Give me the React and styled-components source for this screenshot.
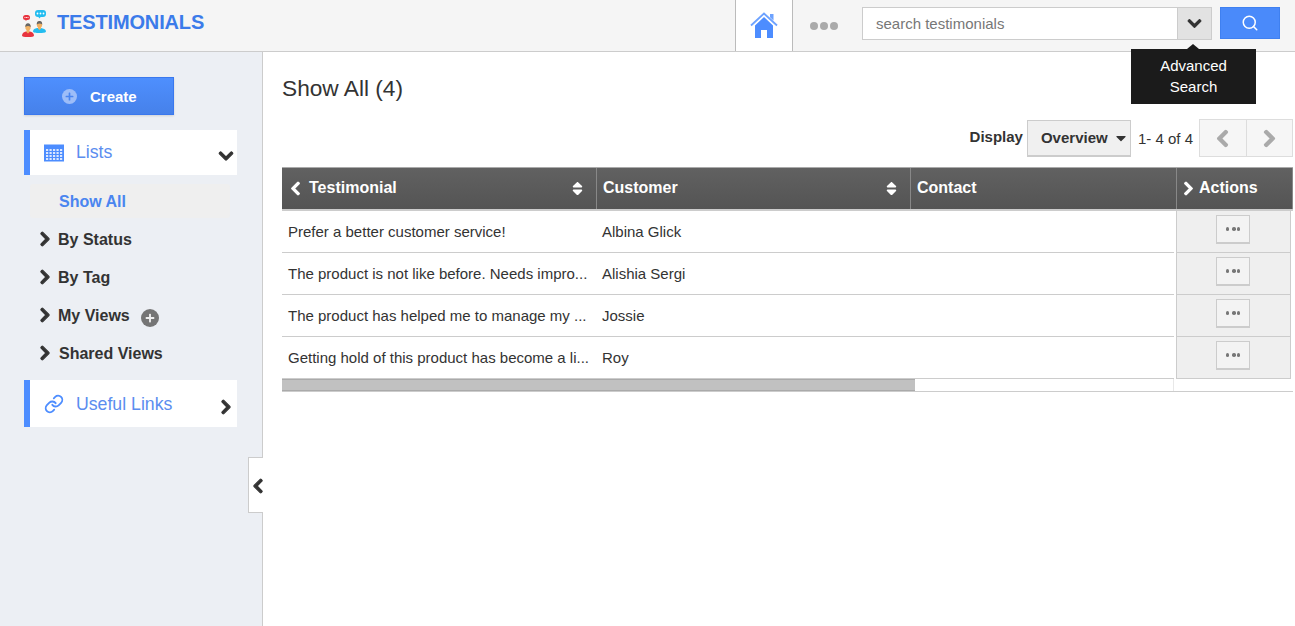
import React from "react";
import styled, { createGlobalStyle } from "styled-components";
import { FaChevronDown, FaChevronRight, FaChevronLeft, FaPlus, FaSort, FaCaretDown } from "react-icons/fa";
import { Search, Link as LinkIcon } from "lucide-react";

const Global = createGlobalStyle`
  html, body { margin: 0; padding: 0; height: 100%; overflow: hidden; }
  body { font-family: "Liberation Sans", Arial, sans-serif; color: #333; background: #fff; }
  #root { height: 100%; }
  * { box-sizing: border-box; }
`;

const Right = styled(FaChevronRight)`stroke: currentColor; stroke-width: 36;`;
const Left = styled(FaChevronLeft)`stroke: currentColor; stroke-width: 36;`;
const Down = styled(FaChevronDown)`stroke: currentColor; stroke-width: 36;`;

const Page = styled.div`
  width: 1295px; height: 626px; display: flex; flex-direction: column; position: relative; overflow: hidden;
`;
const Header = styled.header`
  height: 52px; flex: none; display: flex; align-items: flex-start; background: #f5f5f5; border-bottom: 1px solid #ccc;
`;
const Brand = styled.div`
  display: flex; align-items: flex-start; padding: 10px 0 0 22px; gap: 11px; flex: 1;
`;
const BrandName = styled.span`
  font-size: 20px; font-weight: 700; color: #3b7bea; line-height: 26px; letter-spacing: -0.15px; margin-top: -1px;
`;
const HomeTab = styled.div`
  width: 58px; height: 51px; background: #fff; border-left: 1px solid #bbb; border-right: 1px solid #bbb;
  display: flex; align-items: center; justify-content: center; padding-bottom: 2px;
`;
const Dots = styled.div`
  width: 69px; height: 51px; display: flex; align-items: center; gap: 2px; padding-left: 17px;
`;
const Dot = styled.i`
  width: 8px; height: 8px; border-radius: 50%; background: #aaa; display: block;
`;
const SearchBox = styled.div`
  width: 350px; height: 33px; margin-top: 7px; display: flex; border: 1px solid #ccc; background: #fff; position: relative;
`;
const SearchInput = styled.div`
  flex: 1; font-size: 15px; color: #777; padding-left: 13px; line-height: 31px;
`;
const DropBtn = styled.div`
  width: 34px; background: #e2e2e2; border-left: 1px solid #ccc; display: flex; align-items: center; justify-content: center;
  color: #333; font-size: 15px;
`;
const SearchBtn = styled.div`
  width: 60px; height: 32px; margin: 7px 15px 0 8px; background: #4a8afa; border: 1px solid #3f80f0;
  display: flex; align-items: center; justify-content: center; color: #fff;
`;
const Tooltip = styled.div`
  position: absolute; top: 49px; left: 1131px; width: 125px; height: 55px; background: #1b1b1b; color: #fff;
  font-size: 15px; line-height: 21px; text-align: center; padding-top: 6px; z-index: 5;
  &::before {
    content: ""; position: absolute; top: -5px; left: 56px; border: 6px solid transparent; border-top: 0; border-bottom: 5px solid #1b1b1b;
  }
`;

const Body = styled.div`
  flex: 1; display: flex; min-height: 0;
`;
const Sidebar = styled.aside`
  width: 263px; flex: none; background: #eceff4; border-right: 1px solid #ccc; padding: 25px 25px 0 24px; position: relative;
`;
const CreateBtn = styled.div`
  width: 150px; height: 38px; background: linear-gradient(#4e8ffe, #4681ea); border: 1px solid #3a78ee;
  display: flex; align-items: center; color: #fff; font-size: 15px; font-weight: 700; padding-left: 37px; gap: 13px;
  box-shadow: 0 1px 2px rgba(0,0,0,.12);
`;
const CreateIcon = styled.span`
  width: 15px; height: 15px; border-radius: 50%; background: #9dbdf8; color: #4a85f0; font-size: 9px;
  display: flex; align-items: center; justify-content: center;
`;
const Panel = styled.div`
  width: 213px; height: ${p => p.$h}px; margin-top: ${p => p.$mt}px; background: #fff; border-left: 6px solid #4d8dff;
  display: flex; align-items: center; color: #5b8def; font-size: 17.7px; position: relative; padding-top: ${p => p.$pt || 0}px;
`;
const PanelIcon = styled.span`
  width: 46px; padding-left: ${p => p.$pl}px; display: flex; align-items: center; color: #4d8dff; flex: none;
`;
const PanelChevron = styled.span`
  position: absolute; right: 3px; top: ${p => p.$top}px; color: #333; font-size: 16px; display: flex;
`;
const Nav = styled.div`
  padding: 9px 0 0 6px; display: flex; flex-direction: column; margin-bottom: 8px;
`;
const ActiveItem = styled.div`
  width: 200px; height: 34px; background: #efefef; border-radius: 3px; color: #4a85f0; font-weight: 700; font-size: 16px;
  line-height: 36px; padding-left: 29px; margin-bottom: 2px;
`;
const NavItem = styled.div`
  height: 38px; display: flex; align-items: center; font-weight: 700; font-size: 16px; color: #333; padding: 2px 0 0 7px;
  & > svg { font-size: 16px; margin-right: ${p => p.$gap || 5}px; flex: none; margin-top: -2px; }
`;
const AddBadge = styled.span`
  width: 18px; height: 18px; border-radius: 50%; background: #757575; color: #eee; margin-left: 11px; margin-top: 3px;
  display: flex; align-items: center; justify-content: center; font-size: 10px;
`;
const Handle = styled.div`
  position: absolute; top: 405px; left: 248px; width: 15px; height: 56px; background: #fff; border: 1px solid #ccc; border-right: 0;
  display: flex; align-items: center; justify-content: flex-end; color: #333; font-size: 16px; z-index: 2; overflow: hidden;
  padding-top: 2px;
  svg { margin-right: -3px; flex: none; }
`;

const Main = styled.main`
  flex: 1; min-width: 0; padding: 0 2px 0 19px;
`;
const Title = styled.h1`
  margin: 0; padding-top: 23px; font-size: 22.7px; font-weight: 400; line-height: 26px; color: #333; height: 67px;
`;
const Toolbar = styled.div`
  display: flex; justify-content: flex-end; align-items: center; height: 38px;
`;
const DisplayLabel = styled.span`
  font-size: 15px; font-weight: 700; margin-right: 4px; margin-top: -3px;
`;
const Select = styled.div`
  width: 104px; height: 37px; background: #f0f0f0; border: 1px solid #ccc; border-bottom-width: 2px; display: flex; align-items: center;
  padding-left: 13px; font-size: 15px; font-weight: 700; color: #333; gap: 5px;
`;
const Count = styled.span`
  font-size: 15px; margin: 0 6px 0 7px; color: #333;
`;
const Pager = styled.div`
  display: flex; width: 94px; height: 38px; border: 1px solid #ddd; background: #f6f6f6;
`;
const PageBtn = styled.div`
  flex: 1; display: flex; align-items: center; justify-content: center; color: #aaa; font-size: 19px;
  & + & { border-left: 1px solid #ddd; }
`;

const Grid = styled.div`
  margin-top: 10px; border-bottom: 1px solid #ccc; display: flex; flex-direction: column; width: 1011px;
`;
const HeadRow = styled.div`
  display: grid; grid-template-columns: 315px 314px 266px 116px; height: 44px;
  background: linear-gradient(#616161, #545454); border-top: 1px solid #aaa; border-bottom: 2px solid #ccc;
`;
const HeadCell = styled.div`
  display: flex; align-items: center; color: #fff; font-size: 16px; font-weight: 700; padding: 0 10px 1px ${p => p.$pl}px;
  border-right: 1px solid #888; min-width: 0;
  & > svg { font-size: 15px; margin-right: ${p => p.$gap}px; flex: none; }
`;
const SortIcon = styled.span`
  margin-left: auto; display: flex; font-size: 17px;
`;
const Below = styled.div`
  display: flex; justify-content: space-between; padding-right: 2px;
`;
const Scroller = styled.div`
  width: 892px; display: flex; flex-direction: column;
`;
const Row = styled.div`
  display: grid; grid-template-columns: 314px 1fr; height: 42px; border-bottom: 1px solid #ccc; align-items: center; font-size: 15px; color: #333;
`;
const Cell = styled.div`
  padding: 0 6px; white-space: nowrap; min-width: 0;
`;
const Track = styled.div`
  height: 12px; background: #fff; border-right: 1px solid #e8e8e8;
`;
const Thumb = styled.div`
  width: 633px; height: 12px; background: #c1c1c1; border-top: 1px solid #aaa; border-bottom: 1px solid #aaa;
`;
const Actions = styled.div`
  width: 115px; display: flex; flex-direction: column; border: 1px solid #ccc; border-top: 0; background: #efefef; align-self: flex-start;
`;
const ActionCell = styled.div`
  height: 42px; display: flex; align-items: flex-start; justify-content: center; padding: 4px 1px 0 0;
  &:not(:last-child) { border-bottom: 1px solid #ccc; }
  &:last-child { height: 41px; }
`;
const MoreBtn = styled.div`
  width: 34px; height: 29px; background: #f3f3f3; border: 1px solid #ccc; border-bottom-width: 2px; display: flex; align-items: center; justify-content: center; gap: 1px;
`;
const MiniDot = styled.i`
  width: 3.5px; height: 3.5px; border-radius: 50%; background: #777; display: block;
  &:first-child { margin-right: 2px; }
`;

const Logo = () => (
  <svg width="24" height="27" viewBox="0 0 24 27">
    <rect x="1" y="5" width="7" height="5" rx="2.500" fill="#e8343f" />
    <path d="M3 9.500l1 1.500 1-1.500z" fill="#e8343f" />
    <g fill="#fff"><circle cx="3" cy="7.500" r=".6" /><circle cx="4.500" cy="7.500" r=".6" /><circle cx="6" cy="7.500" r=".6" /></g>
    <rect x="13" y="0" width="11" height="7" rx="3" fill="#23bdf0" />
    <path d="M16 6.500l1.500 2 1.500-2z" fill="#23bdf0" />
    <g fill="#fff"><circle cx="15.500" cy="3.500" r=".9" /><circle cx="18.500" cy="3.500" r=".9" /><circle cx="21.500" cy="3.500" r=".9" /></g>
    <path d="M0 25.500c0-2.500 2-3.500 4-4h4c2 .5 4 1.500 4 4 0 1-2 1.500-6 1.500s-6-.5-6-1.500z" fill="#e8343f" />
    <path d="M4.500 19h3v3l-1.500 1.500-1.500-1.500z" fill="#f1b163" />
    <ellipse cx="6" cy="17" rx="2.700" ry="3.300" fill="#f1b163" />
    <path d="M3.300 17c0-3 1.200-3.800 2.700-3.800s2.700.8 2.700 3.800c-1.800-1.300-3.600-1.300-5.400 0z" fill="#666" />
    <path d="M11 21.500c0-2.500 2-3 4-3.500h4c2 .5 5 1 5 3.500 0 1-3 1.500-6.500 1.500s-6.500-.5-6.500-1.500z" fill="#23bdf0" />
    <path d="M16 16h3v2.500l-1.500 1.500-1.500-1.500z" fill="#f1b163" />
    <ellipse cx="17.500" cy="14.500" rx="2.700" ry="3.300" fill="#f1b163" />
    <path d="M14.800 14.500c0-3 1.200-3.500 2.700-3.500s2.700.5 2.700 3.500c-1.800-1.300-3.600-1.300-5.400 0z" fill="#666" />
  </svg>
);

const HomeIcon = () => (
  <svg width="28" height="28" viewBox="0 0 28 28">
    <path d="M1 14.500L14 2.500l13 12" fill="none" stroke="#6da2ff" strokeWidth="1.800" />
    <path d="M20 3h3.500v6.500L20 6.300z" fill="#6da2ff" />
    <path d="M5 14.500L14 6l9 8.500V27h-6v-8h-6v8H5z" fill="#4d8dff" />
  </svg>
);

const TableIcon = () => (
  <svg width="20" height="18" viewBox="0 0 20 18">
    <rect x="0" y="0.500" width="20" height="17" fill="#4d8dff" />
    <g fill="#dbe7ff">
      {[5, 8, 11, 14].map(y => [2, 5.5, 9, 12.5, 16].map(x => (
        <rect key={`${x}-${y}`} x={x} y={y} width="2.200" height="2" />
      )))}
    </g>
  </svg>
);

const rows = [
  ["Prefer a better customer service!", "Albina Glick"],
  ["The product is not like before. Needs impro...", "Alishia Sergi"],
  ["The product has helped me to manage my ...", "Jossie"],
  ["Getting hold of this product has become a li...", "Roy"],
];

export default function App() {
  return (
    <Page>
      <Global />
      <Header>
        <Brand>
          <Logo />
          <BrandName>TESTIMONIALS</BrandName>
        </Brand>
        <HomeTab><HomeIcon /></HomeTab>
        <Dots><Dot /><Dot /><Dot /></Dots>
        <SearchBox>
          <SearchInput>search testimonials</SearchInput>
          <DropBtn><Down /></DropBtn>
        </SearchBox>
        <SearchBtn><Search size={18} strokeWidth={2} /></SearchBtn>
      </Header>
      <Tooltip>Advanced<br />Search</Tooltip>
      <Body>
        <Sidebar>
          <CreateBtn><CreateIcon><FaPlus /></CreateIcon>Create</CreateBtn>
          <Panel $h={45} $mt={15}>
            <PanelIcon $pl={14}><TableIcon /></PanelIcon>Lists
            <PanelChevron $top={18}><Down /></PanelChevron>
          </Panel>
          <Nav>
            <ActiveItem>Show All</ActiveItem>
            <NavItem><Right />By Status</NavItem>
            <NavItem><Right />By Tag</NavItem>
            <NavItem><Right />My Views<AddBadge><FaPlus /></AddBadge></NavItem>
            <NavItem $gap={6}><Right />Shared Views</NavItem>
          </Nav>
          <Panel $h={47} $mt={0} $pt={1}>
            <PanelIcon $pl={14}><LinkIcon size={20} strokeWidth={2.2} /></PanelIcon>Useful Links
            <PanelChevron $top={19}><Right /></PanelChevron>
          </Panel>
          <Handle><Left /></Handle>
        </Sidebar>
        <Main>
          <Title>Show All (4)</Title>
          <Toolbar>
            <DisplayLabel>Display</DisplayLabel>
            <Select>Overview<FaCaretDown size={16} /></Select>
            <Count>1- 4 of 4</Count>
            <Pager>
              <PageBtn><Left /></PageBtn>
              <PageBtn><Right /></PageBtn>
            </Pager>
          </Toolbar>
          <Grid>
            <HeadRow>
              <HeadCell $pl={6} $gap={6}><Left />Testimonial<SortIcon><FaSort /></SortIcon></HeadCell>
              <HeadCell $pl={6}>Customer<SortIcon><FaSort /></SortIcon></HeadCell>
              <HeadCell $pl={6}>Contact</HeadCell>
              <HeadCell $pl={4} $gap={3}><Right />Actions</HeadCell>
            </HeadRow>
            <Below>
              <Scroller>
                {rows.map(r => (
                  <Row key={r[1]}><Cell>{r[0]}</Cell><Cell>{r[1]}</Cell></Row>
                ))}
                <Track><Thumb /></Track>
              </Scroller>
              <Actions>
                {rows.map(r => (
                  <ActionCell key={r[1]}><MoreBtn><MiniDot /><MiniDot /><MiniDot /></MoreBtn></ActionCell>
                ))}
              </Actions>
            </Below>
          </Grid>
        </Main>
      </Body>
    </Page>
  );
}
